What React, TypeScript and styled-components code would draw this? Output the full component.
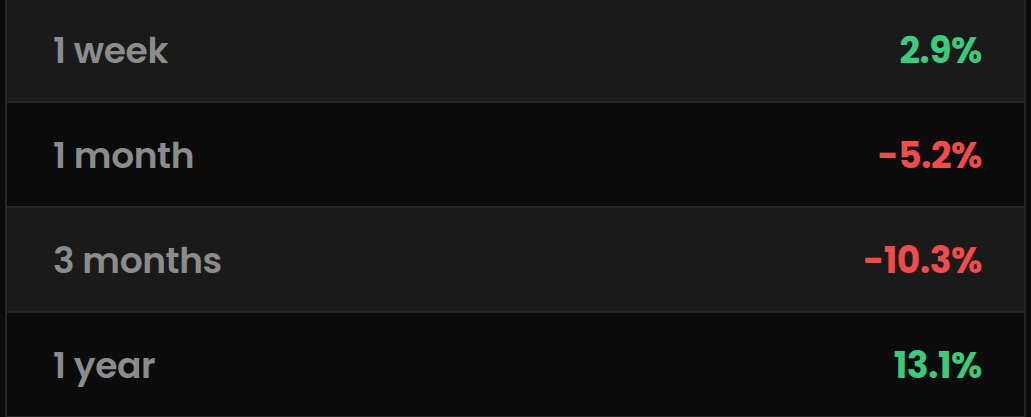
import React from 'react';
import styled, { createGlobalStyle } from 'styled-components';

const GlobalStyle = createGlobalStyle`
  html, body {
    margin: 0;
    padding: 0;
    background: #0b0b0b;
  }
  body {
    font-family: Poppins, Inter, "Noto Sans", sans-serif;
    overflow: hidden;
  }
`;

const Table = styled.div`
  margin: -2px 0 0 5px;
  width: 1021px;
  border-left: 2px solid #262626;
  border-right: 2px solid #262626;
  box-sizing: border-box;
  display: flex;
  flex-direction: column;
`;

const Row = styled.div<{ $striped: boolean }>`
  height: 105px;
  box-sizing: border-box;
  display: flex;
  align-items: center;
  justify-content: space-between;
  padding: 2px 42px 0 46px;
  background: ${(p) => (p.$striped ? '#1a1a1a' : '#0b0b0b')};
  border-bottom: 2px solid #262626;
`;

const Period = styled.span`
  font-size: 36px;
  font-weight: 600;
  color: #8c8c8c;
  letter-spacing: -0.4px;
`;

const Change = styled.span<{ $up: boolean }>`
  font-size: 36px;
  font-weight: 700;
  color: ${(p) => (p.$up ? '#3acb7c' : '#f24b4b')};
  letter-spacing: -0.4px;
`;

const rows = [
  { period: '1 week', change: 2.9 },
  { period: '1 month', change: -5.2 },
  { period: '3 months', change: -10.3 },
  { period: '1 year', change: 13.1 },
];

export default function App() {
  return (
    <>
      <GlobalStyle />
      <Table>
        {rows.map((r, i) => (
          <Row key={r.period} $striped={i % 2 === 0}>
            <Period>{r.period}</Period>
            <Change $up={r.change >= 0}>
              {r.change >= 0 ? '' : '-'}
              {Math.abs(r.change).toFixed(1)}%
            </Change>
          </Row>
        ))}
      </Table>
    </>
  );
}
